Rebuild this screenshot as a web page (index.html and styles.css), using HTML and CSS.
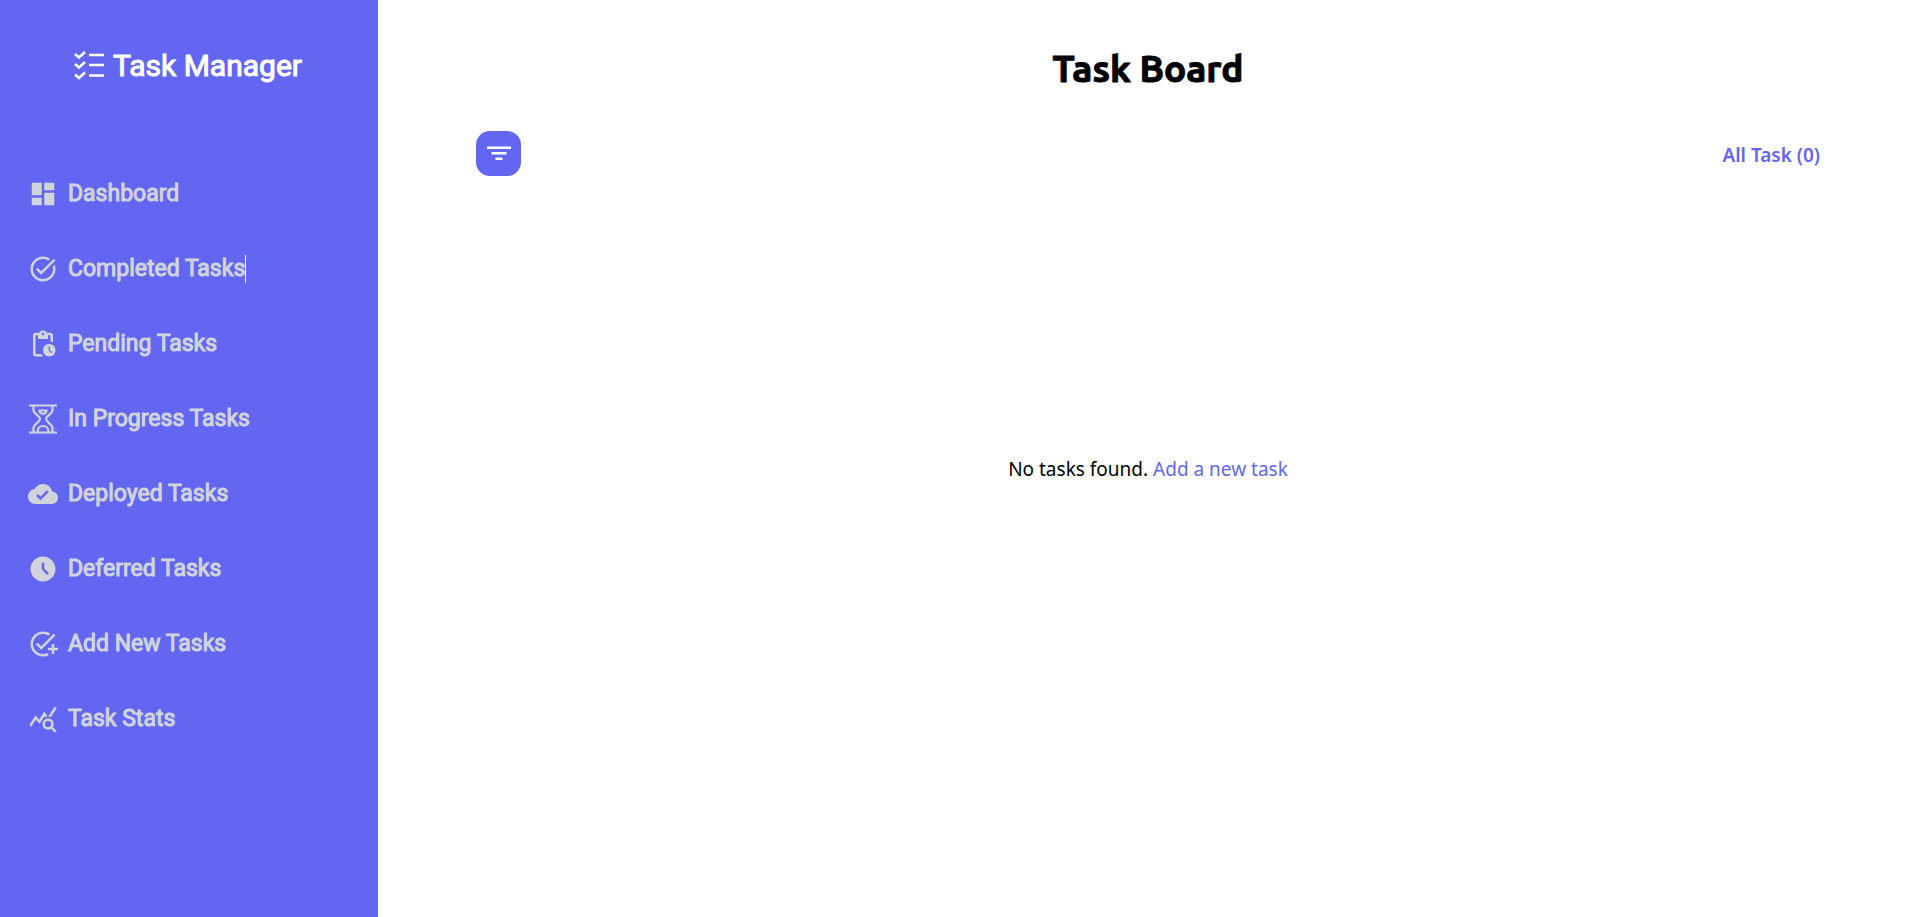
FILE: index.html
```html
<!DOCTYPE html>
<html lang="en">
<head>
<meta charset="utf-8">
<title>Task Manager</title>
<link rel="stylesheet" href="styles.css">
</head>
<body>
<div class="layout">
  <aside class="sidebar">
    <div class="brand">
      <svg class="icon" viewBox="0 0 30 30" fill="none" stroke="currentColor" stroke-width="2.5"><path d="M1 4l4 3.5L11 2M1 14l4 3.5 6-5.500M1 24.500l4 3.500 6-5.500M15 5h15M15 15h15M15 25.500h15"/></svg>
      <span>Task Manager</span>
    </div>
    <nav class="menu">
      <a class="item" href="#"><svg class="icon" viewBox="0 0 24 24"><path d="M3 13h8V3H3v10zm0 8h8v-6H3v6zm10 0h8V11h-8v10zm0-18v6h8V3h-8z"/></svg><span>Dashboard</span></a>
      <a class="item" href="#"><svg class="icon" viewBox="0 0 24 24"><path d="M22 5.18 10.59 16.6l-4.24-4.24 1.41-1.41 2.83 2.83 10-10L22 5.18zm-2.21 5.04c.13.57.21 1.17.21 1.78 0 4.42-3.58 8-8 8s-8-3.58-8-8 3.58-8 8-8c1.58 0 3.04.46 4.28 1.25l1.44-1.44A9.9 9.9 0 0 0 12 2C6.48 2 2 6.48 2 12s4.48 10 10 10 10-4.48 10-10c0-1.19-.22-2.33-.6-3.39l-1.61 1.61z"/></svg><span class="caret">Completed Tasks</span></a>
      <a class="item" href="#"><svg class="icon" viewBox="0 0 24 24"><path d="M17 12c-2.76 0-5 2.24-5 5s2.24 5 5 5 5-2.24 5-5-2.24-5-5-5zm1.65 7.35L16.5 17.2V14h1v2.79l1.85 1.85-.7.71zM18 3h-3.18C14.4 1.84 13.3 1 12 1s-2.4.84-2.82 2H6c-1.1 0-2 .9-2 2v15c0 1.1.9 2 2 2h6.11a6.743 6.743 0 0 1-1.42-2H6V5h2v3h8V5h2v5.08c.71.1 1.38.31 2 .6V5c0-1.1-.9-2-2-2zm-6 2c-.55 0-1-.45-1-1s.45-1 1-1 1 .45 1 1-.45 1-1 1z"/></svg><span>Pending Tasks</span></a>
      <a class="item" href="#"><svg class="icon" viewBox="0 0 30 30"><g fill="none" stroke="currentColor" stroke-width="2.2"><path d="M1 1.500h28M1 28.500h28M5.500 1v5c0 4 6.500 6 6.500 9s-6.500 5-6.500 9v5M24.500 1v5c0 4-6.500 6-6.500 9s6.500 5 6.500 9v5M9.500 28c0-4 2.500-6 5.500-6s5.500 2 5.500 6M11.500 6.500h7c0 2-1.500 3-3.500 3.500-2-.5-3.500-1.500-3.500-3.500z"/></g></svg><span>In Progress Tasks</span></a>
      <a class="item" href="#"><svg class="icon" viewBox="0 0 24 24"><path d="M19.35 10.04C18.67 6.59 15.64 4 12 4 9.11 4 6.6 5.64 5.35 8.04 2.34 8.36 0 10.91 0 14c0 3.31 2.69 6 6 6h13c2.76 0 5-2.24 5-5 0-2.64-2.05-4.78-4.65-4.96zM10 17l-3.5-3.5 1.41-1.41L10 14.17 15.18 9l1.41 1.41L10 17z"/></svg><span>Deployed Tasks</span></a>
      <a class="item" href="#"><svg class="icon" viewBox="0 0 24 24"><path d="M11.99 2C6.47 2 2 6.48 2 12s4.47 10 9.99 10C17.52 22 22 17.52 22 12S17.52 2 11.99 2zm3.3 14.71L11 12.41V7h2v4.59l3.71 3.71-1.42 1.41z"/></svg><span>Deferred Tasks</span></a>
      <a class="item" href="#"><svg class="icon" viewBox="0 0 24 24"><path d="M22 5.18L10.59 16.6l-4.24-4.24 1.41-1.41 2.83 2.83 10-10L22 5.18zM12 20c-4.41 0-8-3.59-8-8s3.59-8 8-8c1.57 0 3.04.46 4.28 1.25l1.45-1.45C16.1 2.67 14.13 2 12 2 6.48 2 2 6.48 2 12s4.48 10 10 10c1.73 0 3.36-.44 4.78-1.22l-1.5-1.5c-1 .46-2.11.72-3.28.72zm7-5h-3v2h3v3h2v-3h3v-2h-3v-3h-2v3z"/></svg><span>Add New Tasks</span></a>
      <a class="item" href="#"><svg class="icon" viewBox="0 0 24 24"><path d="M19.88 18.47c.44-.7.7-1.51.7-2.39 0-2.49-2.01-4.5-4.5-4.5s-4.5 2.01-4.5 4.5 2.01 4.5 4.49 4.5c.88 0 1.7-.26 2.39-.7L21.58 23 23 21.58l-3.12-3.11zm-3.8.11a2.5 2.5 0 0 1 0-5 2.5 2.5 0 0 1 0 5zm-.36-8.5c-.74.02-1.45.18-2.1.45l-.55-.83-3.8 6.18-3.01-3.52-3.63 5.81L1 17l5-8 3 3.5L13 6l2.72 4.08zm2.59.5c-.64-.28-1.33-.45-2.05-.49L21.38 2 23 3.18l-4.69 7.4z"/></svg><span>Task Stats</span></a>
    </nav>
  </aside>
  <main class="board">
    <h1 class="title">Task Board</h1>
    <div class="toolbar">
      <button class="filter" type="button" aria-label="Filter tasks"><svg class="filter-icon" viewBox="0 0 24 24"><path d="M0 4.500h24V7H0zM4.500 10h15v2.500h-15zM8.500 15.500h7V18h-7z"/></svg></button>
      <span class="count">All Task (0)</span>
    </div>
    <p class="empty">No tasks found. <a class="link" href="#">Add a new task</a></p>
  </main>
</div>
</body>
</html>
```
FILE: styles.css
```css
* { box-sizing: border-box; }
body { margin: 0; background: #fff; color: #000; font-family: "Segoe UI", "Noto Sans", sans-serif; }
.layout { display: flex; min-height: 100vh; }
.sidebar { flex: none; width: 378px; padding: 45px 28px; background: #6366f1; font-family: Roboto, sans-serif; -webkit-text-stroke: 1px currentColor; }
.brand { display: flex; align-items: center; justify-content: center; gap: 9px; height: 40px; padding-right: 2px; color: #fff; font-size: 30px; font-weight: 400; }
.icon { flex: none; width: 30px; height: 30px; fill: currentColor; }
.brand .icon { fill: none; }
.menu { display: flex; flex-direction: column; gap: 45px; margin-top: 94px; }
.item { display: flex; align-items: center; gap: 10px; height: 30px; color: #d1d5db; font-size: 23px; font-weight: 400; line-height: 28px; text-decoration: none; }
.caret { border-right: 1px solid #fff; }
.board { flex: 1; display: flex; flex-direction: column; padding: 45px 89px 0 98px; }
.title { margin: 0; font-family: Ubuntu, "Noto Sans", sans-serif; font-size: 37px; line-height: 48px; font-weight: 700; text-align: center; -webkit-text-stroke: 1px currentColor; }
.toolbar { display: flex; align-items: center; justify-content: space-between; margin-top: 38px; }
.filter { display: flex; align-items: center; justify-content: center; width: 45px; height: 45px; padding: 0; border: 0; border-radius: 14px; background: #6366f1; color: #fff; }
.filter-icon { width: 24px; height: 24px; fill: currentColor; }
.count { padding-top: 2px; color: #6366f1; font-size: 19px; font-weight: 600; line-height: 28px; }
.empty { margin: 279px 0 0; font-size: 19px; line-height: 28px; text-align: center; }
.link { color: #6366f1; text-decoration: none; }
```
